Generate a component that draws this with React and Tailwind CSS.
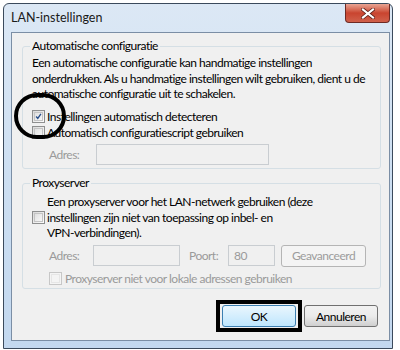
import React from 'react';

const font = { fontFamily: 'Lato, "Noto Sans", sans-serif' };

function Check({ checked, disabled }) {
  return (
    <span
      className={`flex h-[13px] w-[13px] shrink-0 items-center justify-center border ${
        disabled ? 'border-[#c7c7c7] bg-[#f4f4f4]' : 'border-[#8e8f8f] bg-gradient-to-br from-[#d9d9d9] to-[#fdfdfd]'
      }`}
    >
      <span className={`flex h-[9px] w-[9px] items-center justify-center border ${disabled ? 'border-[#e6e6e6]' : 'border-[#c4c4c4] bg-gradient-to-br from-[#e0e0e0] to-[#f8f8f8]'}`}>
        {checked && (
          <svg width="9" height="9" viewBox="0 0 9 9">
            <path d="M1.5 4.5 L3.6 7 L7.6 1.2" fill="none" stroke="#2a4f8a" strokeWidth="1.8" />
          </svg>
        )}
      </span>
    </span>
  );
}

function Field({ w, value }) {
  return (
    <div className={`${w} flex h-[21px] items-center border border-[#c9cdd1] bg-[#f0f0f0] px-[5px] text-[#9a9a9a]`}>
      {value}
    </div>
  );
}

function Button({ children, focused, disabled }) {
  const base = 'flex h-[22px] w-[74px] items-center justify-center rounded-[3px] border';
  if (disabled)
    return <div className={`${base} w-[85px] border-[#b5b5b5] bg-[#f4f4f4] text-[#9c9c9c]`}>{children}</div>;
  return (
    <div
      className={`${base} ${
        focused ? 'border-[#3c7fb1] bg-gradient-to-b from-[#eaf6fd] to-[#bee6fd]' : 'border-[#707070] bg-gradient-to-b from-[#f2f2f2] via-[#ebebeb] to-[#cfcfcf]'
      } text-black`}
    >
      {children}
    </div>
  );
}

export default function App() {
  return (
    <div className="relative h-[350px] w-[400px] overflow-hidden bg-white text-[12px] leading-[15px] tracking-[-0.5px] text-black" style={font}>
      <div className="ml-[3px] mt-[3px] flex h-[346px] w-[390px] flex-col rounded-t-[6px] border border-[#3b4a5c] bg-gradient-to-b from-[#dce8f5] via-[#cddff2] to-[#c3d8ef]">
        <div className="flex h-[28px] items-start">
          <span className="ml-[7px] mt-[6px] text-[12.5px] tracking-normal text-[#1a1a1a]">LAN-instellingen</span>
          <div className="ml-auto mr-[2px] flex h-[19px] w-[45px] items-center justify-center rounded-b-[4px] border border-t-0 border-[#6e2a24] bg-gradient-to-b from-[#e8a493] via-[#c9442f] to-[#d0604b]">
            <svg width="14" height="11" viewBox="0 0 14 11">
              <path d="M2 1.5 L12 9.5 M12 1.5 L2 9.5" stroke="#5b1f18" strokeWidth="3.6" strokeLinecap="square" />
              <path d="M2 1.5 L12 9.5 M12 1.5 L2 9.5" stroke="#ffffff" strokeWidth="2.2" strokeLinecap="square" />
            </svg>
          </div>
        </div>
        <div className="ml-[7px] mr-[2px] flex h-[309px] flex-col border border-[#7b8ea5] bg-[#f0f0f0]">
          <fieldset className="ml-[10px] mr-[8px] mt-[5px] h-[131px] min-w-0 rounded-[3px] border border-[#d5dfe5] px-[9px]">
            <legend className="ml-[-2px] px-[2px] leading-[16px]">Automatische configuratie</legend>
            <div className="mt-[1px] whitespace-nowrap leading-[15.5px]">
              Een automatische configuratie kan handmatige instellingen
              <br />
              onderdrukken. Als u handmatige instellingen wilt gebruiken, dient u de
              <br />
              automatische configuratie uit te schakelen.
            </div>
            <div className="mt-[7px] flex h-[16px] items-center gap-[2px]">
              <Check checked />
              <span>Instellingen automatisch detecteren</span>
            </div>
            <div className="flex h-[16px] items-center gap-[2px]">
              <Check />
              <span>Automatisch configuratiescript gebruiken</span>
            </div>
            <div className="mt-[3px] flex items-center">
              <span className="ml-[17px] w-[47px] text-[#9a9a9a]">Adres:</span>
              <Field w="w-[173px]" />
            </div>
          </fieldset>
          <fieldset className="ml-[10px] mr-[8px] mt-[6px] h-[114px] min-w-0 rounded-[3px] border border-[#d5dfe5] px-[9px]">
            <legend className="ml-[-2px] px-[2px] leading-[16px]">Proxyserver</legend>
            <div className="mt-[3px] flex items-center gap-[2px]">
              <Check />
              <div className="whitespace-nowrap leading-[15.5px]">
                Een proxyserver voor het LAN-netwerk gebruiken (deze
                <br />
                instellingen zijn niet van toepassing op inbel- en
                <br />
                VPN-verbindingen).
              </div>
            </div>
            <div className="mt-[4px] flex items-center">
              <span className="ml-[17px] w-[44px] text-[#9a9a9a]">Adres:</span>
              <Field w="w-[87px]" />
              <span className="ml-[9px] w-[39px] text-[#9a9a9a]">Poort:</span>
              <Field w="w-[47px]" value="80" />
              <div className="ml-[6px]">
                <Button disabled>Geavanceerd</Button>
              </div>
            </div>
            <div className="mt-[4px] flex h-[16px] items-center gap-[3px] pl-[17px] text-[#9a9a9a]">
              <Check disabled />
              <span>Proxyserver niet voor lokale adressen gebruiken</span>
            </div>
          </fieldset>
          <div className="mt-[16px] flex justify-end gap-[8px] pr-[11px]">
            <div className="relative">
              <Button focused>OK</Button>
              <div className="absolute -inset-x-[6px] -inset-y-[5px] border-[4px] border-black" />
            </div>
            <Button>Annuleren</Button>
          </div>
        </div>
      </div>
      <div className="absolute left-[14px] top-[93px] h-[46px] w-[52px] rounded-full border-[4px] border-black" />
    </div>
  );
}
